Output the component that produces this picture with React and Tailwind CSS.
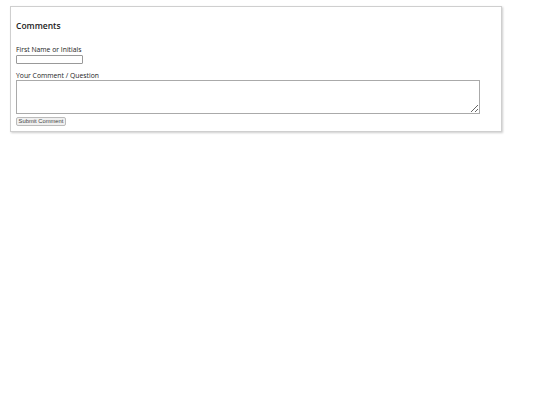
export default function App() {
  return (
    <div className="min-h-[405px] bg-white pl-[10px] pt-[6px]" style={{ fontFamily: '"Open Sans", sans-serif' }}>
      <div className="w-[492px] border border-[#cfcfcf] bg-white px-[5px] pt-[13px] pb-[5px] shadow-[1px_1px_2px_rgba(0,0,0,0.2)]">
        <h3 className="text-[8.5px] font-semibold leading-[12px] text-[#222]">Comments</h3>
        <form className="mt-[13px] flex flex-col items-start">
          <label className="text-[6.8px] leading-[9px] text-[#222]">First Name or Initials</label>
          <input type="text" className="mt-[1px] block h-[9px] w-[67px] rounded-[1px] border border-[#999] bg-white" />
          <label className="mt-[7px] text-[6.8px] leading-[9px] text-[#222]">Your Comment / Question</label>
          <textarea className="block h-[34px] w-[464px] resize border border-[#aaa] bg-white" />
          <button
            type="button"
            className="mt-[3px] h-[9px] w-[50px] rounded-[2px] border border-[#bbb] bg-[#f0f0f0] px-0 text-[5.8px] leading-[7px] text-[#444]"
            style={{ fontFamily: '"Liberation Sans", Arial, sans-serif' }}
          >
            Submit Comment
          </button>
        </form>
      </div>
    </div>
  );
}
